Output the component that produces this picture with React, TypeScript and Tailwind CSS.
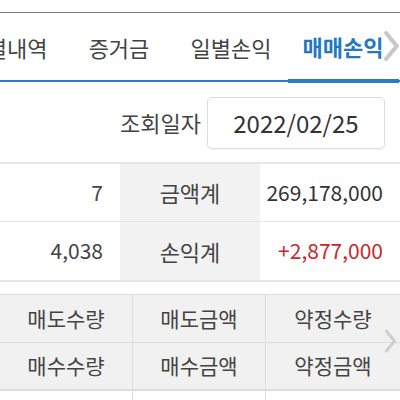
import React from "react";

const font = { fontFamily: '"Noto Sans CJK KR", "Noto Sans", sans-serif' };

function Chevron({ className }: { className: string }) {
  return (
    <svg className={className} viewBox="0 0 16 30" fill="none">
      <path d="M3 3 L13 15 L3 27" stroke="currentColor" strokeWidth="4" strokeLinecap="round" strokeLinejoin="round" />
    </svg>
  );
}

export default function App() {
  const tabs = ["체결내역", "증거금", "일별손익", "매매손익"];
  return (
    <div className="w-[400px] h-[400px] overflow-hidden bg-white text-[#444]" style={font}>
      <div className="h-[12px] bg-white" />
      <div className="h-[1px] bg-[#7a7a7a]" />
      <div className="relative h-[70px] overflow-hidden">
        <div className="absolute left-0 right-0 top-[67px] h-[2px] bg-[#2b7bc8]" />
        <div className="flex ml-[-49px] items-start">
          {tabs.map((t, i) => (
            <div
              key={t}
              className={
                i === 3
                  ? "relative w-[112px] shrink-0 h-[70px] flex items-center justify-center text-[22px] font-bold text-[#2577c0] pb-[3px]"
                  : "relative w-[112px] shrink-0 h-[67px] flex items-center justify-center text-[22px] text-[#444] pt-[1px]"
              }
            >
              {t}
              {i === 3 && <div className="absolute left-[1px] right-0 bottom-0 h-[4px] bg-[#2b7bc8]" />}
            </div>
          ))}
        </div>
        <Chevron className="absolute right-[0px] top-[17px] w-[17px] h-[32px] text-[#c8c8c8]" />
      </div>

      <div className="flex items-center justify-end h-[79px] pr-[15px] gap-[6px]">
        <span className="text-[22px] text-[#444]">조회일자</span>
        <div className="w-[178px] h-[52px] border border-[#dcdcdc] rounded-[5px] flex items-center justify-center text-[24px] text-[#333] shadow-[0_1px_1px_rgba(0,0,0,0.05)]">
          2022/02/25
        </div>
      </div>

      <div className="border-t-2 border-b-2 border-[#e6e6e6]">
        <div className="flex h-[58px] border-b border-[#e6e6e6]">
          <div className="w-[120px] flex items-center justify-end pr-[17px] text-[21px] text-[#444]">7</div>
          <div className="w-[140px] bg-[#f2f2f2] flex items-center justify-center text-[22px] text-[#444]">금액계</div>
          <div className="flex-1 flex items-center justify-end pr-[17px] text-[21px] text-[#333]">269,178,000</div>
        </div>
        <div className="flex h-[58px]">
          <div className="w-[120px] flex items-center justify-end pr-[17px] text-[21px] text-[#444]">4,038</div>
          <div className="w-[140px] bg-[#f2f2f2] flex items-center justify-center text-[22px] text-[#444]">손익계</div>
          <div className="flex-1 flex items-center justify-end pr-[17px] text-[21px] text-[#c8282b]">+2,877,000</div>
        </div>
      </div>

      <div className="h-[12px]" />

      <div className="relative border-t border-[#dcdcdc]">
        <div className="grid grid-cols-[133px_133px_134px] h-[48px] bg-[#f1f1f1] border-b border-[#dcdcdc] text-[21px] text-[#444]">
          <div className="flex items-center justify-center border-r border-[#dcdcdc]">매도수량</div>
          <div className="flex items-center justify-center border-r border-[#dcdcdc]">매도금액</div>
          <div className="flex items-center justify-center">약정수량</div>
        </div>
        <div className="grid grid-cols-[133px_133px_134px] h-[48px] bg-[#f1f1f1] border-b-2 border-[#dcdcdc] text-[21px] text-[#444]">
          <div className="flex items-center justify-center border-r border-[#dcdcdc]">매수수량</div>
          <div className="flex items-center justify-center border-r border-[#dcdcdc]">매수금액</div>
          <div className="flex items-center justify-center">약정금액</div>
        </div>
        <div className="grid grid-cols-[133px_133px_134px] h-[20px]">
          <div className="border-r border-[#dcdcdc]" />
          <div className="border-r border-[#dcdcdc]" />
          <div />
        </div>
        <Chevron className="absolute right-[3px] top-[33px] w-[13px] h-[26px] text-[#cfcfcf]" />
      </div>
    </div>
  );
}
